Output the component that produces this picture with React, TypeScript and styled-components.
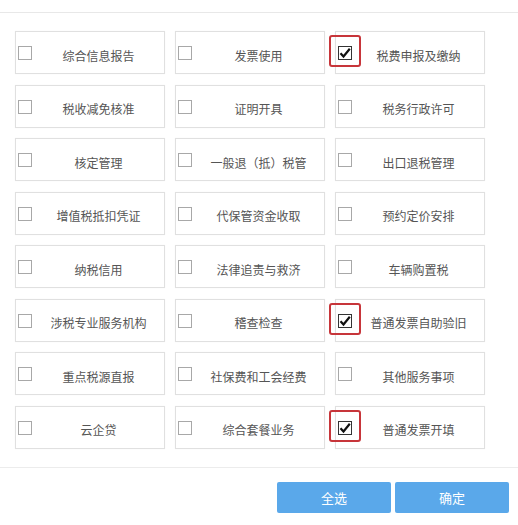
import React from 'react'
import styled, { createGlobalStyle } from 'styled-components'

const GlobalStyle = createGlobalStyle`
  html, body {
    margin: 0;
    padding: 0;
    background: #fff;
    font-family: "Noto Sans CJK SC", "Liberation Sans", sans-serif;
  }
`

const ITEMS = [
  { label: '综合信息报告' },
  { label: '发票使用' },
  { label: '税费申报及缴纳', checked: true },
  { label: '税收减免核准' },
  { label: '证明开具' },
  { label: '税务行政许可' },
  { label: '核定管理' },
  { label: '一般退（抵）税管' },
  { label: '出口退税管理' },
  { label: '增值税抵扣凭证' },
  { label: '代保管资金收取' },
  { label: '预约定价安排' },
  { label: '纳税信用' },
  { label: '法律追责与救济' },
  { label: '车辆购置税' },
  { label: '涉税专业服务机构' },
  { label: '稽查检查' },
  { label: '普通发票自助验旧', checked: true },
  { label: '重点税源直报' },
  { label: '社保费和工会经费' },
  { label: '其他服务事项' },
  { label: '云企贷' },
  { label: '综合套餐业务' },
  { label: '普通发票开填', checked: true },
]

const Page = styled.div`
  width: 518px;
  height: 525px;
  display: flex;
  flex-direction: column;
`

const TopBar = styled.div`
  height: 12px;
  border-bottom: 1px solid #e8e8e8;
`

const Grid = styled.div`
  display: grid;
  grid-template-columns: repeat(3, 150px);
  grid-auto-rows: 43px;
  column-gap: 10px;
  row-gap: 10.5px;
  padding: 18px 0 0 15px;
`

const Cell = styled.div`
  position: relative;
  box-sizing: border-box;
  border: 1px solid #e0e0e0;
  box-shadow: 0 0 1px rgba(0, 0, 0, 0.06);
  background: #fff;
  display: flex;
  align-items: center;
  justify-content: center;
  padding: 5px 0 0 17px;
`

const Box = styled.span<{ $checked?: boolean }>`
  position: absolute;
  left: 2px;
  top: 14px;
  box-sizing: border-box;
  width: 14px;
  height: 14px;
  border: 1px solid ${(p) => (p.$checked ? '#333' : '#a8a8a8')};
  background: #fff;
  display: flex;
  align-items: center;
  justify-content: center;
`

const Highlight = styled.span`
  position: absolute;
  left: -7px;
  top: 3px;
  width: 28px;
  height: 28px;
  border: 2px solid #c7353a;
  border-radius: 3px;
`

const Label = styled.span`
  font-size: 12px;
  color: #555;
  white-space: nowrap;
`

const Footer = styled.div`
  margin-top: 18px;
  border-top: 1px solid #ececec;
  display: flex;
  justify-content: flex-end;
  gap: 4px;
  padding: 14px 9px 0 0;
`

const Button = styled.button`
  width: 114px;
  height: 31px;
  border: none;
  border-radius: 2px;
  background: #5aa8ea;
  color: #fff;
  font-family: "Noto Sans CJK SC", "Liberation Sans", sans-serif;
  font-size: 13px;
`

function Check() {
  return (
    <svg width="12" height="12" viewBox="0 0 12 12">
      <path d="M1.5 6.2 L4.5 9.5 L10.8 1.8" fill="none" stroke="#111" strokeWidth="2.2" />
    </svg>
  )
}

export default function App() {
  return (
    <Page>
      <GlobalStyle />
      <TopBar />
      <Grid>
        {ITEMS.map((item) => (
          <Cell key={item.label}>
            <Box $checked={item.checked}>{item.checked && <Check />}</Box>
            {item.checked && <Highlight />}
            <Label>{item.label}</Label>
          </Cell>
        ))}
      </Grid>
      <Footer>
        <Button>全选</Button>
        <Button>确定</Button>
      </Footer>
    </Page>
  )
}
